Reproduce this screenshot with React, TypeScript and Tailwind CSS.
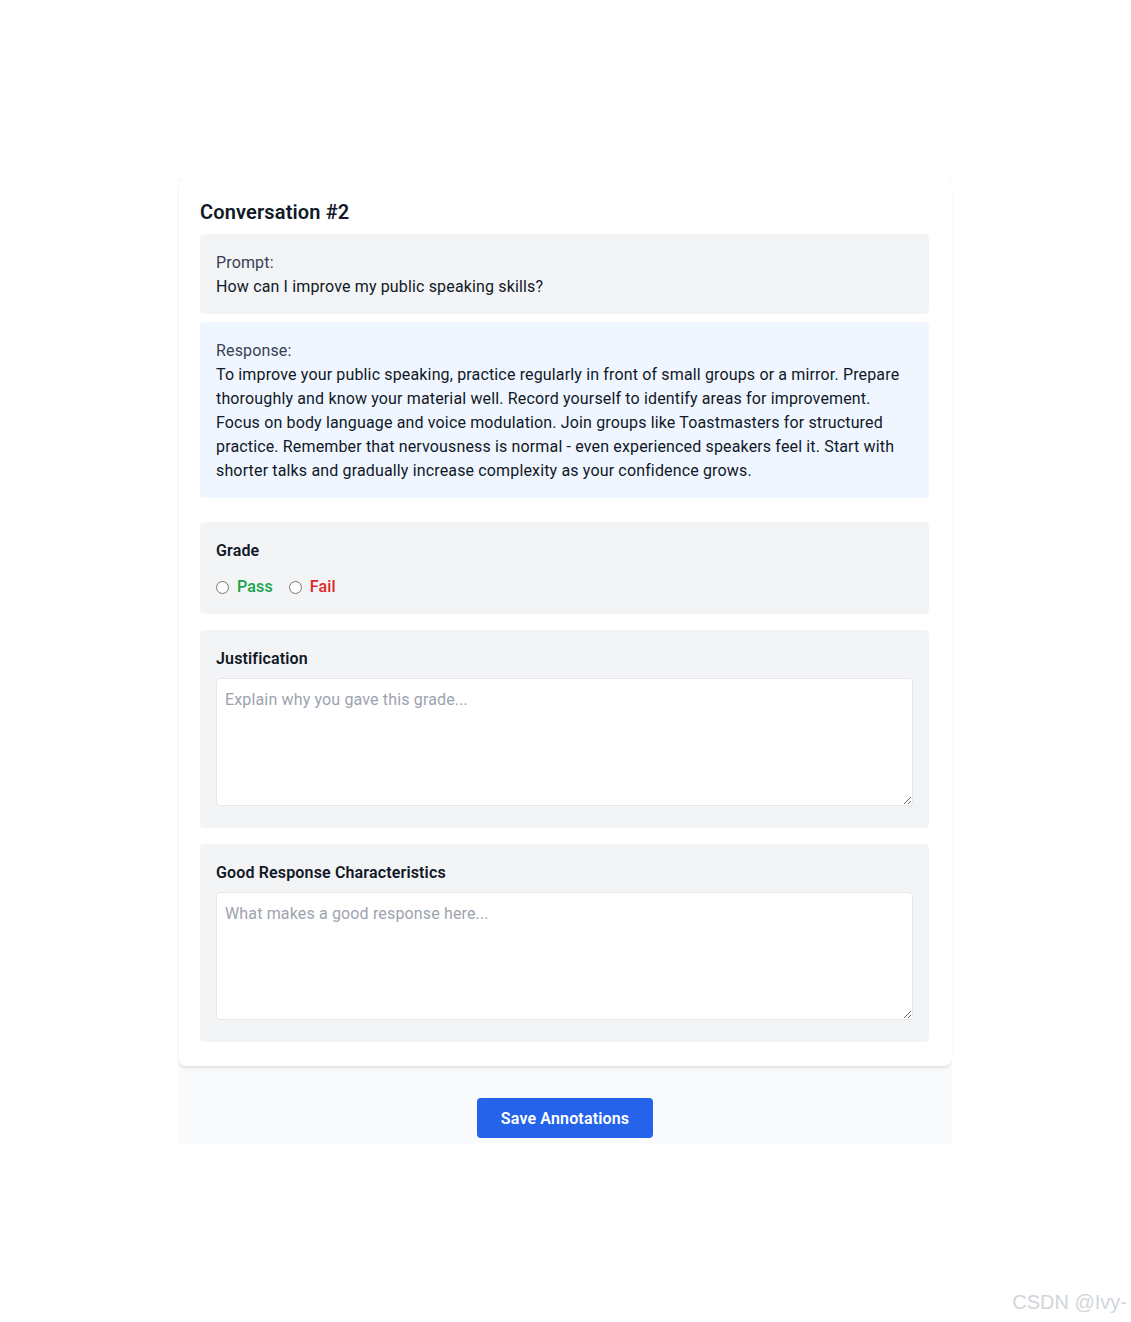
import React from "react";

export default function App() {
  return (
    <div className="min-h-[1322px] bg-white relative" style={{ fontFamily: "Roboto, 'Noto Sans', sans-serif" }}>
      <div className="pt-[178px] pl-[178px] tracking-[0.15px]">
        <div className="w-[774px] bg-[#f8fafc]">
          <div className="bg-white rounded-lg shadow-[0_3px_3px_-1px_rgba(0,0,0,0.1)] border-l border-[#f5f6f7] pl-[21px] pr-[23px] pt-5 pb-6">
            <h2 className="text-xl leading-7 font-semibold text-[#111827] mb-2">Conversation #2</h2>
            <div className="bg-[#f3f4f6] rounded px-4 pt-[17px] pb-[15px] text-base leading-6">
              <div className="text-[#374151]">Prompt:</div>
              <div className="text-[#111827]">How can I improve my public speaking skills?</div>
            </div>
            <div className="bg-[#eff6ff] rounded px-4 pt-[17px] pb-[15px] mt-2 text-base leading-6">
              <div className="text-[#374151]">Response:</div>
              <div className="text-[#111827]">
                To improve your public speaking, practice regularly in front of small groups or a mirror. Prepare thoroughly and know your material well. Record yourself to identify areas for improvement. Focus on body language and voice modulation. Join groups like Toastmasters for structured practice. Remember that nervousness is normal - even experienced speakers feel it. Start with shorter talks and gradually increase complexity as your confidence grows.
              </div>
            </div>
            <div className="bg-[#f3f4f6] rounded px-4 pt-[17px] pb-[15px] mt-6">
              <div className="text-base leading-6 font-semibold text-[#111827]">Grade</div>
              <div className="flex items-center gap-4 mt-3 text-base leading-6">
                <label className="flex items-center">
                  <input type="radio" name="grade" className="w-[13px] h-[13px] m-0" />
                  <span className="ml-2 text-[#16a34a] font-medium">Pass</span>
                </label>
                <label className="flex items-center">
                  <input type="radio" name="grade" className="w-[13px] h-[13px] m-0" />
                  <span className="ml-2 text-[#dc2626] font-medium">Fail</span>
                </label>
              </div>
            </div>
            <div className="bg-[#f3f4f6] rounded px-4 pt-[17px] pb-[22px] mt-4">
              <div className="text-base leading-6 font-semibold text-[#111827] mb-[7px]">Justification</div>
              <textarea
                className="block w-full h-[128px] bg-white border border-[#e5e7eb] rounded-sm p-2 pt-[9px] text-base leading-6 text-[#111827] placeholder:text-[#9ca3af] resize-y"
                placeholder="Explain why you gave this grade..."
              />
            </div>
            <div className="bg-[#f3f4f6] rounded px-4 pt-[17px] pb-[22px] mt-4">
              <div className="text-base leading-6 font-semibold text-[#111827] mb-[7px]">Good Response Characteristics</div>
              <textarea
                className="block w-full h-[128px] bg-white border border-[#e5e7eb] rounded-sm p-2 pt-[9px] text-base leading-6 text-[#111827] placeholder:text-[#9ca3af] resize-y"
                placeholder="What makes a good response here..."
              />
            </div>
          </div>
          <div className="flex justify-center pt-8 pb-1.5">
            <button className="h-10 px-6 pt-[1px] bg-[#2563eb] text-white font-semibold text-base rounded">Save Annotations</button>
          </div>
        </div>
      </div>
      <div className="absolute right-[4px] top-[1288px] text-[20px] leading-7 text-[#d1d5db]" style={{ fontFamily: "'Liberation Sans', Arial, sans-serif" }}>
        CSDN @Ivy-
      </div>
    </div>
  );
}
